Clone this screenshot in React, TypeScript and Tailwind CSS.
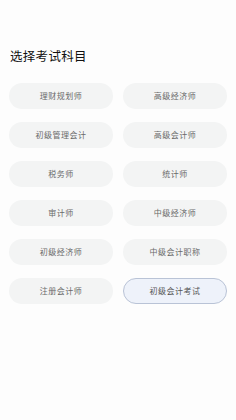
import React from "react";

const items = [
  "理财规划师",
  "高级经济师",
  "初级管理会计",
  "高级会计师",
  "税务师",
  "统计师",
  "审计师",
  "中级经济师",
  "初级经济师",
  "中级会计职称",
  "注册会计师",
  "初级会计考试",
];

export default function App() {
  return (
    <div
      className="w-[236px] h-[420px] bg-[#fdfdfd] overflow-hidden"
      style={{ fontFamily: '"Noto Sans CJK SC", "Noto Sans", sans-serif' }}
    >
      <div className="pt-[47px] pl-[10px] text-[12.5px] leading-[18px] font-normal text-[#111] tracking-[0.3px]">
        选择考试科目
      </div>
      <div className="grid grid-cols-2 gap-x-[10px] gap-y-[13px] px-[9px] mt-[18px]">
        {items.map((t, i) => {
          const selected = i === items.length - 1;
          return (
            <div
              key={t}
              className={
                selected
                  ? "h-[26px] rounded-full flex items-center justify-center bg-[#eef2fa] border border-[#b9c3d6] text-[8px] text-[#555] tracking-[0.5px]"
                  : "h-[26px] rounded-full flex items-center justify-center bg-[#f3f4f4] text-[8px] text-[#6a6a6a] tracking-[0.5px]"
              }
            >
              {t}
            </div>
          );
        })}
      </div>
    </div>
  );
}
